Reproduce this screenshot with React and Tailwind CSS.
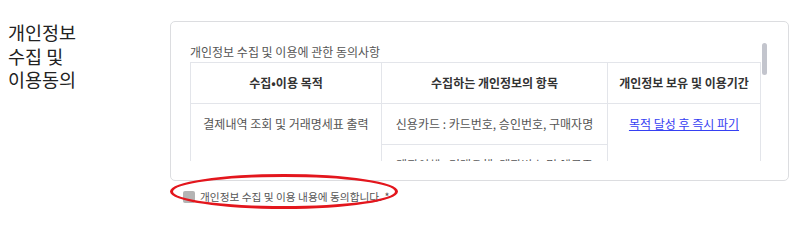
const rows = [
  {
    purpose: "결제내역 조회 및 거래명세표 출력",
    items: [
      "신용카드 : 카드번호, 승인번호, 구매자명",
      "계좌이체 : 거래은행, 계좌번호 및 예금주",
      "휴대폰 : 휴대폰번호, 통신사, 구매자명",
    ],
    period: "목적 달성 후 즉시 파기",
  },
  {
    purpose: "결제 관련 고객 문의 응대",
    items: ["이름, 이메일주소, 연락처", "주문번호, 결제일시, 결제금액"],
    period: "목적 달성 후 즉시 파기",
  },
];

const cell = "border border-[#e3e5ea] px-[8px] py-[12px] leading-[16px] align-top text-center";

const ConsentTable = () => (
  <table className="w-[570px] table-fixed border-collapse text-[12px]">
    <colgroup>
      <col className="w-[191px]" />
      <col className="w-[226px]" />
      <col className="w-[153px]" />
    </colgroup>
    <thead>
      <tr className="text-[#333] font-bold">
        <th className={cell}>수집•이용 목적</th>
        <th className={cell}>수집하는 개인정보의 항목</th>
        <th className={cell}>개인정보 보유 및 이용기간</th>
      </tr>
    </thead>
    <tbody className="text-[#555]">
      {rows.map((row) =>
        row.items.map((item, i) => (
          <tr key={row.purpose + item}>
            {i === 0 && (
              <td className={cell} rowSpan={row.items.length}>
                {row.purpose}
              </td>
            )}
            <td className={cell}>{item}</td>
            {i === 0 && (
              <td className={cell} rowSpan={row.items.length}>
                <a href="#" className="text-[#3640f2] underline">
                  {row.period}
                </a>
              </td>
            )}
          </tr>
        ))
      )}
    </tbody>
  </table>
);

export default function App() {
  return (
    <div className="w-[800px] h-[212px] bg-white font-['Noto_Sans_CJK_KR','Noto_Sans',sans-serif] flex pt-[21px] pl-[8px] overflow-hidden">
      <div className="w-[162px] text-[18.5px] leading-[23.5px] text-[#222]">
        개인정보
        <br />
        수집 및
        <br />
        이용동의
      </div>

      <div className="w-[619px] flex flex-col">
        <div className="border border-[#dcdde0] rounded-[5px] px-[19px] py-[19px]">
          <div className="relative h-[120px] overflow-hidden">
            <p className="text-[12px] leading-[21px] text-[#555]">개인정보 수집 및 이용에 관한 동의사항</p>
            <ConsentTable />
            {/* scrollbar thumb */}
            <span className="absolute top-[2px] right-[2px] w-[5px] h-[32px] rounded-full bg-[#c3c5cd]" />
          </div>
        </div>

        <label className="relative mt-[10px] flex items-center gap-[5px] pl-[13px] text-[10.7px] leading-[12px] text-[#555]">
          <span className="w-[12px] h-[12px] rounded-[2px] bg-[#b4b4b4]" />
          <span>개인정보 수집 및 이용 내용에 동의합니다. *</span>
          <span className="absolute left-0 top-[-17px] w-[228px] h-[35px] rounded-[50%] border-[3px] border-[#e3161d]" />
        </label>
      </div>
    </div>
  );
}
